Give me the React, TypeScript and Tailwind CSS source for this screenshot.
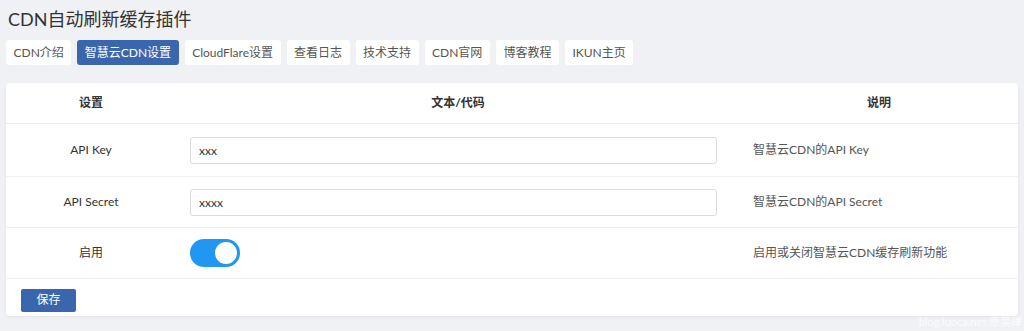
import { useState } from 'react'

const tabs = ['CDN介绍', '智慧云CDN设置', 'CloudFlare设置', '查看日志', '技术支持', 'CDN官网', '博客教程', 'IKUN主页']

const font = { fontFamily: 'Lato, "Noto Sans CJK SC", sans-serif' }

export default function App() {
  const [enabled, setEnabled] = useState(true)
  const [apiKey, setApiKey] = useState('xxx')
  const [apiSecret, setApiSecret] = useState('xxxx')

  return (
    <div className="relative h-[331px] w-[1024px] overflow-hidden bg-[#f0f1f4] text-[#444]" style={font}>
      <h1 className="pl-[8px] pt-[5px] text-[18px] leading-[28px] text-[#333]">CDN自动刷新缓存插件</h1>

      <div className="mt-[7px] flex gap-[6px] pl-[6px]">
        {tabs.map((t, i) => (
          <button
            key={t}
            type="button"
            className={
              i === 1
                ? 'h-[25px] rounded-[3px] bg-[#3a66ad] px-[7.5px] text-[12px] text-white'
                : 'h-[25px] rounded-[3px] bg-white px-[7.5px] text-[12px] text-[#555]'
            }
          >
            {t}
          </button>
        ))}
      </div>

      <div className="ml-[6px] mt-[18px] w-[1012px] rounded-[4px] bg-white shadow-[0_1px_3px_rgba(0,0,0,0.06)]">
        <div className="grid h-[41px] grid-cols-[170px_564px_278px] items-center border-b border-[#ebebeb] text-[12px] font-bold text-[#333]">
          <div className="text-center">设置</div>
          <div className="text-center">文本/代码</div>
          <div className="text-center">说明</div>
        </div>

        <div className="grid h-[53px] grid-cols-[170px_564px_278px] items-center border-b border-[#f0f0f0] text-[12px]">
          <div className="text-center text-[#333]">API Key</div>
          <div className="pl-[14px]">
            <input
              value={apiKey}
              onChange={(e) => setApiKey(e.target.value)}
              className="h-[27px] w-[527px] rounded-[3px] border border-[#dcdcdc] px-[8px] text-[12px] text-[#333] outline-none"
            />
          </div>
          <div className="pl-[13px] text-[#555]">智慧云CDN的API Key</div>
        </div>

        <div className="grid h-[51px] grid-cols-[170px_564px_278px] items-center border-b border-[#f0f0f0] text-[12px]">
          <div className="text-center text-[#333]">API Secret</div>
          <div className="pl-[14px]">
            <input
              value={apiSecret}
              onChange={(e) => setApiSecret(e.target.value)}
              className="h-[27px] w-[527px] rounded-[3px] border border-[#dcdcdc] px-[8px] text-[12px] text-[#333] outline-none"
            />
          </div>
          <div className="pl-[13px] text-[#555]">智慧云CDN的API Secret</div>
        </div>

        <div className="grid h-[51px] grid-cols-[170px_564px_278px] items-center border-b border-[#f0f0f0] text-[12px]">
          <div className="text-center text-[#333]">启用</div>
          <div className="pl-[14px]">
            <button
              type="button"
              onClick={() => setEnabled(!enabled)}
              className={
                enabled
                  ? 'flex h-[28px] w-[50px] items-center justify-end rounded-full bg-[#2196f3] px-[3px]'
                  : 'flex h-[28px] w-[50px] items-center justify-start rounded-full bg-[#ccc] px-[3px]'
              }
            >
              <span className="h-[22px] w-[22px] rounded-full bg-white" />
            </button>
          </div>
          <div className="pl-[13px] text-[#555]">启用或关闭智慧云CDN缓存刷新功能</div>
        </div>

        <div className="h-[37px] pl-[15px] pt-[7px]">
          <button type="button" className="h-[23px] w-[55px] rounded-[2px] bg-[#3a66ad] text-[12px] text-white">
            保存
          </button>
        </div>
      </div>

      <div className="absolute bottom-[1px] right-[2px] text-[11px] text-white/70">blog.luoca.net 原荚律</div>
    </div>
  )
}
